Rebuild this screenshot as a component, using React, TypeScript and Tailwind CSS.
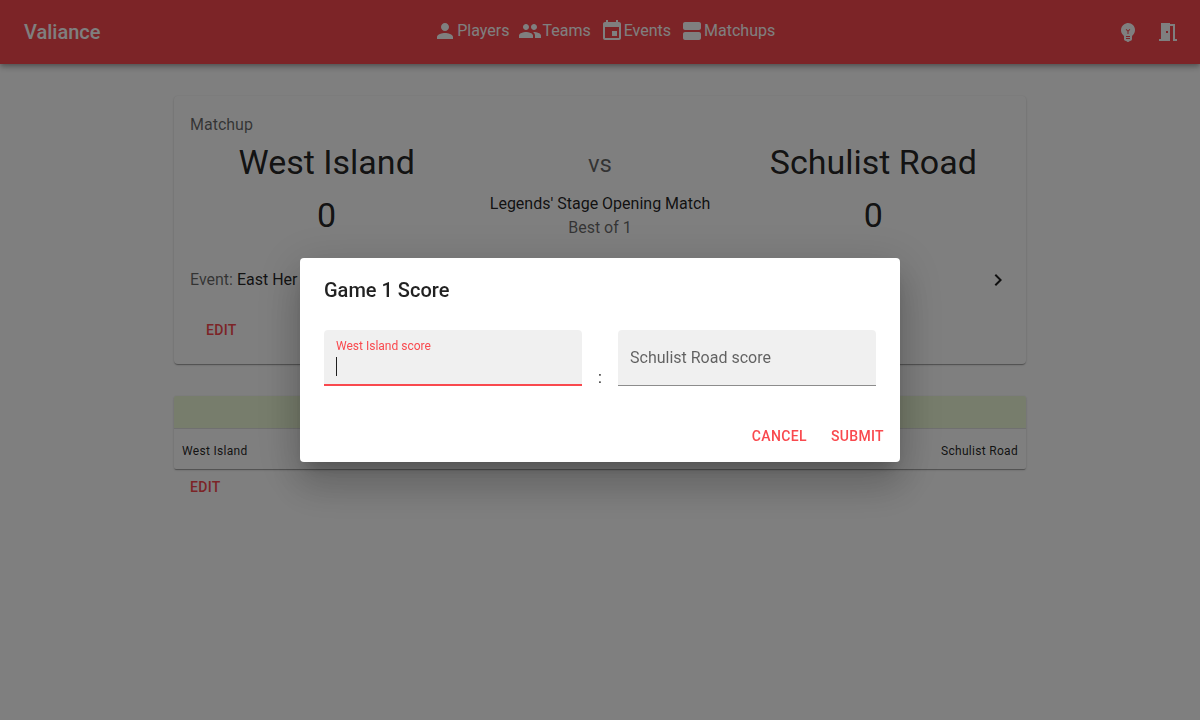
import { useState, type ReactNode } from 'react';

const icons = {
  person:
    'M12 12c2.21 0 4-1.79 4-4s-1.79-4-4-4-4 1.79-4 4 1.79 4 4 4zm0 2c-2.67 0-8 1.34-8 4v2h16v-2c0-2.66-5.33-4-8-4z',
  people:
    'M16 11c1.66 0 2.99-1.34 2.99-3S17.66 5 16 5c-1.66 0-3 1.34-3 3s1.34 3 3 3zm-8 0c1.66 0 2.99-1.34 2.99-3S9.66 5 8 5C6.34 5 5 6.34 5 8s1.34 3 3 3zm0 2c-2.33 0-7 1.17-7 3.5V19h14v-2.5c0-2.33-4.67-3.5-7-3.5zm8 0c-.29 0-.62.02-.97.05 1.16.84 1.97 1.97 1.97 3.45V19h6v-2.5c0-2.33-4.67-3.5-7-3.5z',
  event:
    'M17 12h-5v5h5v-5zM16 1v2H8V1H6v2H5c-1.11 0-1.99.9-1.99 2L3 19c0 1.1.89 2 2 2h14c1.1 0 2-.9 2-2V5c0-1.1-.9-2-2-2h-1V1h-2zm3 18H5V8h14v11z',
  agenda:
    'M19 13H5c-1.1 0-2 .9-2 2v4c0 1.1.9 2 2 2h14c1.1 0 2-.9 2-2v-4c0-1.1-.9-2-2-2zm0-10H5c-1.1 0-2 .9-2 2v4c0 1.1.9 2 2 2h14c1.1 0 2-.9 2-2V5c0-1.1-.9-2-2-2z',
  bulb:
    'M12 3c-.46 0-.93.04-1.4.14-2.76.53-4.96 2.76-5.48 5.52-.48 2.61.48 5.01 2.22 6.56.43.38.66.91.66 1.47V19c0 1.1.9 2 2 2h.28c.35.6.98 1 1.72 1s1.38-.4 1.72-1H14c1.1 0 2-.9 2-2v-2.31c0-.55.22-1.09.64-1.46C18.09 13.95 19 12.08 19 10c0-3.87-3.13-7-7-7zm2 16h-4v-1h4v1zm0-2h-4v-1h4v1zm-1.5-5.59V14h-1v-2.59L9.67 9.59l.71-.71L12 10.5l1.62-1.62.71.71-1.83 1.82z',
  door: 'M14 6v15H3v-2h2V3h9v1h5v15h2v2h-4V6h-3zm-4 5v2h2v-2h-2z',
  chevron: 'M10 6 8.59 7.41 13.17 12l-4.58 4.59L10 18l6-6z',
};

function Icon({ name }: { name: keyof typeof icons }) {
  return (
    <svg viewBox="0 0 24 24" className="size-6 shrink-0 fill-current" aria-hidden="true">
      <path d={icons[name]} />
    </svg>
  );
}

function TextButton({ children }: { children: ReactNode }) {
  return (
    <button type="button" className="h-9 rounded px-2 text-sm font-medium uppercase tracking-wide text-[#f9494e]">
      {children}
    </button>
  );
}

const navItems: { label: string; icon: keyof typeof icons }[] = [
  { label: 'Players', icon: 'person' },
  { label: 'Teams', icon: 'people' },
  { label: 'Events', icon: 'event' },
  { label: 'Matchups', icon: 'agenda' },
];

function Header() {
  return (
    <header className="flex h-16 items-center justify-between bg-[#f9494e] px-6 text-white shadow-[0_2px_4px_-1px_rgba(0,0,0,0.2),0_4px_5px_0_rgba(0,0,0,0.14),0_1px_10px_0_rgba(0,0,0,0.12)]">
      <a href="#home" className="text-xl font-medium">
        Valiance
      </a>
      <nav className="flex gap-[9px] pb-0.5">
        {navItems.map((item) => (
          <a key={item.label} href={`#${item.label.toLowerCase()}`} className="flex items-start leading-6">
            <Icon name={item.icon} />
            <span>{item.label}</span>
          </a>
        ))}
      </nav>
      <div className="-mr-3 flex">
        <button type="button" aria-label="Toggle theme" className="rounded-full p-2">
          <Icon name="bulb" />
        </button>
        <button type="button" aria-label="Sign out" className="rounded-full p-2">
          <Icon name="door" />
        </button>
      </div>
    </header>
  );
}

const raised =
  'shadow-[0_2px_1px_-1px_rgba(0,0,0,0.2),0_1px_1px_0_rgba(0,0,0,0.14),0_1px_3px_0_rgba(0,0,0,0.12),0_0_2px_0_rgba(0,0,0,0.06)]';

function TeamScore({ name, score }: { name: string; score: number }) {
  return (
    <div className="flex flex-col gap-[11px] text-center text-[34px] leading-[42px]">
      <h2>{name}</h2>
      <p>{score}</p>
    </div>
  );
}

function MatchupCard() {
  return (
    <section className={`rounded bg-white px-4 pt-[17px] pb-4 ${raised}`}>
      <p className="text-black/60">Matchup</p>
      <div className="grid grid-cols-3 pt-1">
        <TeamScore name="West Island" score={0} />
        <div className="text-center">
          <p className="pt-[7px] text-2xl leading-8 text-black/60">vs</p>
          <p className="pt-3">Legends&apos; Stage Opening Match</p>
          <p className="text-black/60">Best of 1</p>
        </div>
        <TeamScore name="Schulist Road" score={0} />
      </div>
      <a href="#event" className="mt-7 flex items-center justify-between">
        <span>
          <span className="text-black/60">Event:</span> East Her
        </span>
        <Icon name="chevron" />
      </a>
      <div className="mt-5 px-2">
        <TextButton>Edit</TextButton>
      </div>
    </section>
  );
}

function GameResult() {
  return (
    <section className="mt-8">
      <div className={`overflow-hidden rounded-xs bg-white ${raised}`}>
        <div className="h-[33px] border-b border-[#e0e0e0] bg-[#eefbd8]" />
        <div className="flex h-10 items-center justify-between px-2 pt-1 text-xs tracking-wide">
          <span>West Island</span>
          <span>Schulist Road</span>
        </div>
      </div>
      <div className="px-2">
        <TextButton>Edit</TextButton>
      </div>
    </section>
  );
}

function ScoreField({ id, label, autoFocus = false }: { id: string; label: string; autoFocus?: boolean }) {
  const [value, setValue] = useState('');
  const [focused, setFocused] = useState(autoFocus);
  const floating = focused || value !== '';
  return (
    <div
      className={`relative h-14 flex-1 rounded-t bg-black/6 ${
        focused ? 'border-b-2 border-[#f9494e]' : 'border-b border-black/42'
      }`}
    >
      <label
        htmlFor={id}
        className={`pointer-events-none absolute left-3 ${
          floating ? 'top-2 text-xs leading-4' : 'top-4 text-base leading-6'
        } ${focused ? 'text-[#f9494e]' : 'text-black/60'}`}
      >
        {label}
      </label>
      <input
        id={id}
        inputMode="numeric"
        value={value}
        autoFocus={autoFocus}
        onChange={(e) => setValue(e.target.value)}
        onFocus={() => setFocused(true)}
        onBlur={() => setFocused(false)}
        className={`h-full w-full bg-transparent px-3 pt-6 pb-2 outline-none ${
          value === '' ? 'caret-transparent' : ''
        }`}
      />
      {focused && value === '' && (
        <span className="pointer-events-none absolute top-[27px] left-3 h-[19px] w-px bg-black/87" />
      )}
    </div>
  );
}

function ScoreDialog() {
  return (
    <div className="fixed inset-0 flex items-center justify-center bg-black/50 p-8">
      <form
        role="dialog"
        aria-labelledby="dialog-title"
        className="w-full max-w-[600px] rounded bg-white shadow-[0_11px_15px_-7px_rgba(0,0,0,0.2),0_24px_38px_3px_rgba(0,0,0,0.14),0_9px_46px_8px_rgba(0,0,0,0.12)]"
      >
        <h2 id="dialog-title" className="px-6 py-4 text-xl leading-8 font-medium">
          Game 1 Score
        </h2>
        <div className="flex items-end px-6 pt-2 pb-6">
          <ScoreField id="home-score" label="West Island score" autoFocus />
          <span className="-mb-1 w-9 text-center">:</span>
          <ScoreField id="away-score" label="Schulist Road score" />
        </div>
        <div className="flex justify-end gap-2 p-2">
          <TextButton>Cancel</TextButton>
          <TextButton>Submit</TextButton>
        </div>
      </form>
    </div>
  );
}

export default function App() {
  return (
    <div className="font-[Roboto,sans-serif] text-base text-black/87">
      <Header />
      <main className="mx-auto max-w-[900px] px-6 py-8">
        <MatchupCard />
        <GameResult />
      </main>
      <ScoreDialog />
    </div>
  );
}
